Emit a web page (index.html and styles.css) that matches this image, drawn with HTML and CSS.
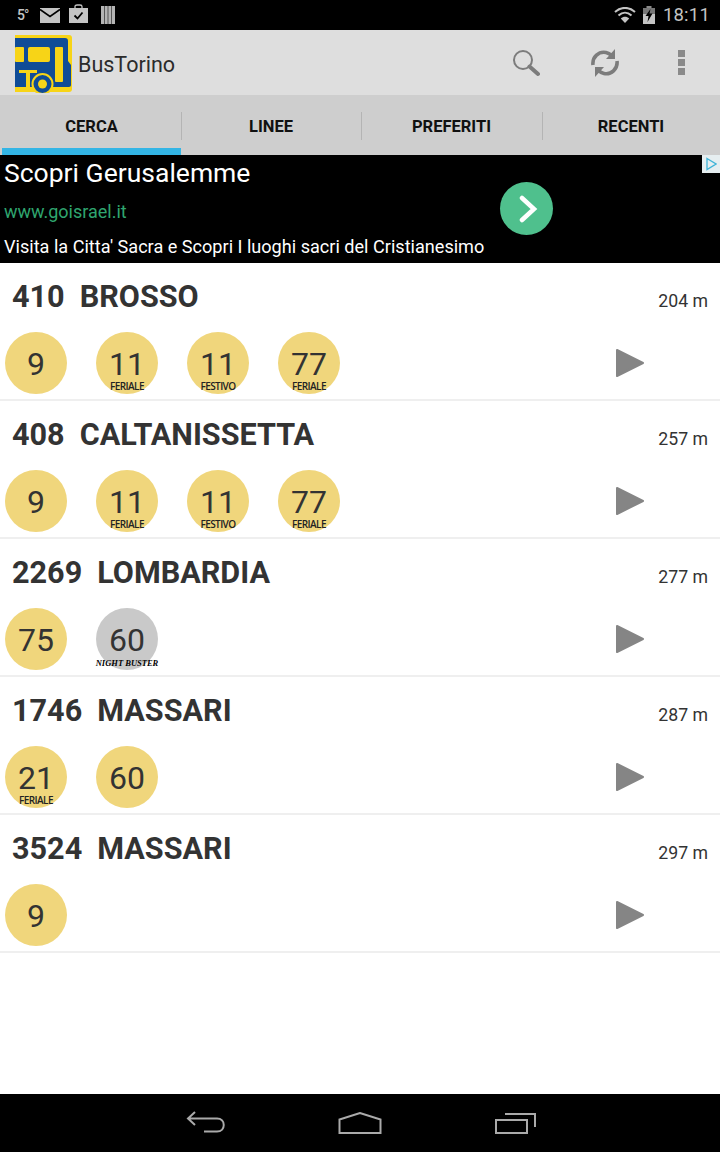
FILE: index.html
```html
<!DOCTYPE html>
<html lang="en">
<head>
    <meta charset="UTF-8">
    <meta name="viewport" content="width=device-width, initial-scale=1.0">
    <title>BusTorino</title>
    <link rel="stylesheet" href="styles.css">
</head>
<body>
    <div class="app">
        <div class="statusbar">
            <div class="status-left">
                <span class="temp">5°</span>
                <svg class="st-mail" width="20" height="15" viewBox="0 0 20 15"><rect width="20" height="15" fill="#c4c4c4"/><path d="M0 1.500 10 8.500 20 1.500" fill="none" stroke="#000" stroke-width="1.600"/></svg>
                <svg class="st-bag" width="19" height="19" viewBox="0 0 19 19"><path d="M6 5V2.500C6 1.500 7 1 8 1H11C12 1 13 1.500 13 2.500V5" fill="none" stroke="#c4c4c4" stroke-width="1.300"/><rect y="4" width="19" height="15" fill="#c4c4c4"/><path d="M5.500 11.500 8.500 14.500 13.500 8.500" fill="none" stroke="#000" stroke-width="1.800"/></svg>
                <svg class="st-bars" width="14" height="18" viewBox="0 0 14 18"><path d="M0 0H14V18H0Z" fill="#b4b4b4"/><path d="M3.500 0V18M7 0V18M10.500 0V18" stroke="#555" stroke-width="1"/></svg>
            </div>
            <div class="status-right">
                <svg width="22" height="16" viewBox="0 0 22 16"><path d="M1 5C7-.5 15-.5 21 5" fill="none" stroke="#c4c4c4" stroke-width="2"/><path d="M4.500 8.500C8.500 4.800 13.500 4.800 17.500 8.500" fill="none" stroke="#c4c4c4" stroke-width="2"/><path d="M11 16 6.800 11.500C9.300 9.300 12.700 9.300 15.200 11.500Z" fill="#c4c4c4"/></svg>
                <svg width="12" height="18" viewBox="0 0 12 18"><rect x="3.500" width="5" height="2" fill="#8a8a8a"/><rect y="2" width="12" height="16" fill="#c4c4c4"/><rect y="2" width="12" height="6" fill="#777"/><path d="M7.500 3 2.500 10H5.500L4.500 16 9.500 7.500H6.500Z" fill="#000"/></svg>
                <span class="clock">18:11</span>
            </div>
        </div>

        <div class="actionbar">
            <svg class="logo" width="58" height="58" viewBox="0 0 58 58">
                <path d="M0 0H54C56 0 57 1 57 3V54C57 56 56 57 54 57H0Z" fill="#f7d417"/>
                <path d="M0 3H50C52 3 53 4 53 6V26L56 30V50C56 51 55 52 54 52H0Z" fill="#0f4c97"/>
                <rect y="12" width="9" height="15" rx="1" fill="#f7d417"/>
                <rect x="13" y="12" width="22" height="15" rx="2" fill="#f7d417"/>
                <rect x="40" y="12" width="8" height="35" rx="1" fill="#f7d417"/>
                <path d="M4 35H22V38H15V52H11V38H4Z" fill="#f7d417"/>
                <path d="M0 52H20V57H0Z" fill="#f7d417"/>
                <circle cx="27.500" cy="49" r="10" fill="#0f4c97" stroke="#f7d417" stroke-width="2"/>
                <circle cx="27.500" cy="49" r="4.500" fill="#f7d417"/>
            </svg>
            <span class="app-title">BusTorino</span>
            <div class="actions">
                <svg class="act-search" width="28" height="28" viewBox="0 0 28 28"><circle cx="11" cy="11" r="9" fill="none" stroke="#7c7c7c" stroke-width="2"/><path d="M17.500 17.500 26 25" stroke="#7c7c7c" stroke-width="4" stroke-linecap="round"/></svg>
                <svg class="act-refresh" width="28" height="30" viewBox="0 0 28 30"><path d="M2 17C1 9 8 3 15 4.500 17.500 5 19 6 20.500 7.500" fill="none" stroke="#7c7c7c" stroke-width="3.600"/><path d="M24 1V11H15Z" fill="#7c7c7c"/><path d="M26 13C27 21 20 27 13 25.500 10.500 25 9 24 7.500 22.500" fill="none" stroke="#7c7c7c" stroke-width="3.600"/><path d="M4 29V19H13Z" fill="#7c7c7c"/></svg>
                <div class="overflow"><i></i><i></i><i></i></div>
            </div>
        </div>

        <div class="tabs">
            <div class="tab active">CERCA</div>
            <div class="tab">LINEE</div>
            <div class="tab">PREFERITI</div>
            <div class="tab">RECENTI</div>
        </div>

        <div class="ad">
            <div class="ad-title">Scopri Gerusalemme</div>
            <div class="ad-url">www.goisrael.it</div>
            <div class="ad-text">Visita la Citta' Sacra e Scopri I luoghi sacri del Cristianesimo</div>
            <div class="ad-go"><svg width="20" height="30" viewBox="0 0 20 30"><path d="M3 4 15 15 3 26" fill="none" stroke="#fff" stroke-width="4.500" stroke-linecap="round" stroke-linejoin="miter"/></svg></div>
            <div class="ad-badge"><svg width="12" height="14" viewBox="0 0 12 14"><path d="M2 1.500 11 7 2 12.500Z" fill="none" stroke="#3fb4d8" stroke-width="1.300"/></svg></div>
        </div>

        <div class="stops">
            <div class="stop">
                <div class="stop-head"><span class="stop-name"><b>410</b><b>BROSSO</b></span><span class="dist">204 m</span></div>
                <div class="stop-lines">
                    <div class="bus"><span class="num">9</span></div>
                    <div class="bus"><span class="num">11</span><span class="tag">FERIALE</span></div>
                    <div class="bus"><span class="num">11</span><span class="tag">FESTIVO</span></div>
                    <div class="bus"><span class="num">77</span><span class="tag">FERIALE</span></div>
                    <svg class="play" width="30" height="30" viewBox="0 0 30 30"><path d="M2 2 28 15 2 28Z" fill="#858585" stroke="#858585" stroke-width="2" stroke-linejoin="round"/></svg>
                </div>
            </div>
            <div class="stop">
                <div class="stop-head"><span class="stop-name"><b>408</b><b>CALTANISSETTA</b></span><span class="dist">257 m</span></div>
                <div class="stop-lines">
                    <div class="bus"><span class="num">9</span></div>
                    <div class="bus"><span class="num">11</span><span class="tag">FERIALE</span></div>
                    <div class="bus"><span class="num">11</span><span class="tag">FESTIVO</span></div>
                    <div class="bus"><span class="num">77</span><span class="tag">FERIALE</span></div>
                    <svg class="play" width="30" height="30" viewBox="0 0 30 30"><path d="M2 2 28 15 2 28Z" fill="#858585" stroke="#858585" stroke-width="2" stroke-linejoin="round"/></svg>
                </div>
            </div>
            <div class="stop">
                <div class="stop-head"><span class="stop-name"><b>2269</b><b>LOMBARDIA</b></span><span class="dist">277 m</span></div>
                <div class="stop-lines">
                    <div class="bus"><span class="num">75</span></div>
                    <div class="bus night"><span class="num">60</span><span class="tag">NIGHT BUSTER</span></div>
                    <svg class="play" width="30" height="30" viewBox="0 0 30 30"><path d="M2 2 28 15 2 28Z" fill="#858585" stroke="#858585" stroke-width="2" stroke-linejoin="round"/></svg>
                </div>
            </div>
            <div class="stop">
                <div class="stop-head"><span class="stop-name"><b>1746</b><b>MASSARI</b></span><span class="dist">287 m</span></div>
                <div class="stop-lines">
                    <div class="bus"><span class="num">21</span><span class="tag">FERIALE</span></div>
                    <div class="bus"><span class="num">60</span></div>
                    <svg class="play" width="30" height="30" viewBox="0 0 30 30"><path d="M2 2 28 15 2 28Z" fill="#858585" stroke="#858585" stroke-width="2" stroke-linejoin="round"/></svg>
                </div>
            </div>
            <div class="stop">
                <div class="stop-head"><span class="stop-name"><b>3524</b><b>MASSARI</b></span><span class="dist">297 m</span></div>
                <div class="stop-lines">
                    <div class="bus"><span class="num">9</span></div>
                    <svg class="play" width="30" height="30" viewBox="0 0 30 30"><path d="M2 2 28 15 2 28Z" fill="#858585" stroke="#858585" stroke-width="2" stroke-linejoin="round"/></svg>
                </div>
            </div>
        </div>

        <div class="navbar">
            <svg width="40" height="24" viewBox="0 0 40 24"><path d="M9 1 2 7.500 9 14M2 7.500H31C40 7.500 40 20.500 31 20.500H18" fill="none" stroke="#aaa" stroke-width="2"/></svg>
            <svg width="44" height="22" viewBox="0 0 44 22"><path d="M1.500 21V7.500L22 1 42.500 7.500V21Z" fill="none" stroke="#aaa" stroke-width="2"/></svg>
            <svg width="42" height="22" viewBox="0 0 42 22"><rect x="1" y="8" width="31" height="13" fill="none" stroke="#aaa" stroke-width="2"/><path d="M10 2H40V15" fill="none" stroke="#aaa" stroke-width="2"/></svg>
        </div>
    </div>
</body>
</html>
```

FILE: styles.css
```css
* { box-sizing: border-box; }
body { margin: 0; padding: 0; background: #fff; font-family: Roboto, sans-serif; }
.app { width: 720px; height: 1152px; display: flex; flex-direction: column; overflow: hidden; }

.statusbar { height: 30px; background: #000; display: flex; justify-content: space-between; align-items: center; padding: 0 10px 0 17px; }
.status-left { display: flex; align-items: center; }
.temp { color: #c4c4c4; font-size: 14px; font-weight: 500; width: 23px; letter-spacing: -1px; }
.st-bag { margin-left: 9px; margin-top: -3px; }
.st-bars { margin-left: 13px; }
.status-right { display: flex; align-items: center; gap: 7px; }
.clock { color: #c4c4c4; font-size: 18.500px; margin-left: 1px; letter-spacing: .2px; }

.actionbar { height: 65px; background: #dedede; display: flex; align-items: center; padding-left: 15px; }
.logo { flex: none; margin-top: 2px; }
.app-title { font-size: 21.500px; color: #2b2b2b; margin-left: 5px; margin-top: 4px; }
.actions { margin-left: auto; display: flex; align-items: center; padding-right: 35px; }
.act-search { margin-right: 51px; }
.act-refresh { margin-right: 59px; }
.overflow { display: flex; flex-direction: column; gap: 2px; }
.overflow i { display: block; width: 7px; height: 7px; background: #8a8a8a; }

.tabs { height: 60px; background: #cecece; display: grid; grid-template-columns: 179px 180px 181px 178px; padding-left: 2px; }
.tab { display: flex; align-items: center; justify-content: center; font-size: 16.500px; font-weight: 700; color: #111; position: relative; padding-top: 2px; }
.tab + .tab::before { content: ""; position: absolute; left: 0; top: 17px; height: 28px; width: 1px; background: #b4b4b4; }
.tab.active::after { content: ""; position: absolute; left: 0; right: 0; bottom: 0; height: 7px; background: #33b5e5; }

.ad { height: 108px; background: #000; position: relative; padding: 0 4px; color: #fff; flex: none; }
.ad-title { font-size: 26.500px; line-height: 36px; }
.ad-url { font-size: 18px; line-height: 24px; margin-top: 9px; color: #2fa56f; }
.ad-text { font-size: 18.100px; line-height: 24px; margin-top: 11px; }
.ad-go { position: absolute; left: 500px; top: 27px; width: 53px; height: 53px; border-radius: 50%; background: #4fc08d; display: flex; align-items: center; justify-content: center; padding-left: 4px; }
.ad-badge { position: absolute; right: 0; top: 0; width: 18px; height: 18px; background: #e6eef0; display: flex; align-items: center; justify-content: center; }

.stops { flex: 1; background: #fff; }
.stop { height: 138px; border-bottom: 2px solid #efefef; padding-top: 16px; }
.stop-head { display: flex; justify-content: space-between; align-items: baseline; padding: 0 12px; height: 36px; }
.stop-name { font-size: 30.600px; line-height: 36px; color: #333; display: flex; gap: 15px; }
.stop-name b { font-weight: 700; }
.dist { font-size: 17.700px; color: #333; }
.stop-lines { display: flex; align-items: center; gap: 29px; padding-left: 5px; margin-top: 17px; height: 62px; }
.bus { width: 62px; height: 62px; border-radius: 50%; background: #f0d67c; position: relative; display: flex; align-items: center; justify-content: center; flex: none; padding-top: 2px; }
.bus.night { background: #c9c9c9; }
.num { display: block; font-size: 32px; line-height: 26px; color: #333; }
.tag { position: absolute; left: -10px; right: -10px; bottom: 3px; text-align: center; font-size: 10px; line-height: 10px; color: #222; font-family: "Open Sans", sans-serif; font-weight: 600; letter-spacing: -.6px; }
.night .tag { font-family: "Liberation Serif", serif; font-style: italic; font-weight: 700; font-size: 8.500px; letter-spacing: 0; color: #000; bottom: 2px; }
.play { margin-left: auto; margin-right: 75px; flex: none; }

.navbar { height: 58px; background: #000; display: flex; align-items: center; justify-content: center; padding-left: 2px; flex: none; }
.navbar svg:nth-child(1) { margin-right: 112px; }
.navbar svg:nth-child(2) { margin-right: 113px; }
```
